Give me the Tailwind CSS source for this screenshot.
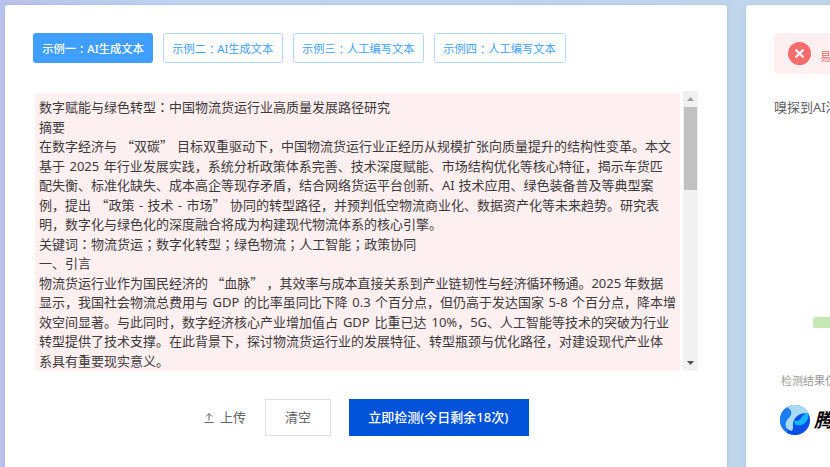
<!DOCTYPE html>
<html lang="zh-CN">
<head>
<meta charset="utf-8">
<title>AI生成文本检测</title>
<script src="https://cdn.jsdelivr.net/npm/@tailwindcss/browser@4"></script>
</head>
<body class="h-[467px] w-[830px] overflow-hidden bg-[#bfd5ef] font-['Noto_Sans','Noto_Sans_CJK_SC',sans-serif]">
<div class="flex h-[467px] gap-[19px] overflow-hidden bg-linear-to-r from-[#b9c2ec] via-[#bdd3ef] via-20% to-[#bfd7ec] pt-[5px] pl-[5px]">
  <main class="flex h-[480px] w-[722px] shrink-0 flex-col rounded-[3px] bg-white pt-7 pl-7 shadow-[0_0_3px_rgba(120,145,180,0.35)]">
    <nav class="flex h-[30px] gap-[9.5px] text-[11.25px] leading-[30px] whitespace-nowrap text-[#409eff]">
      <button class="flex w-[120px] items-center justify-center rounded-[3px] bg-[#409eff] pt-0.5 font-medium text-white">示例一<span lang="ja" class="font-['Noto_Sans_CJK_JP']">：</span>AI生成文本</button>
      <button class="flex w-[120.5px] items-center justify-center rounded-[3px] border border-[#b3d8ff] pt-0.5">示例二<span lang="ja" class="font-['Noto_Sans_CJK_JP']">：</span>AI生成文本</button>
      <button class="flex w-[131.5px] items-center justify-center rounded-[3px] border border-[#b3d8ff] pt-0.5">示例三<span lang="ja" class="font-['Noto_Sans_CJK_JP']">：</span>人工编写文本</button>
      <button class="flex w-[132px] items-center justify-center rounded-[3px] border border-[#b3d8ff] pt-0.5">示例四<span lang="ja" class="font-['Noto_Sans_CJK_JP']">：</span>人工编写文本</button>
    </nav>
    <section class="mt-7 ml-0.5 flex h-[280px] w-[663px]">
      <div class="mt-0.5 grid h-[278px] w-[645px] auto-rows-[19.54px] content-start bg-[#feeff0] pt-[5px] pl-1 text-[13px] leading-[19.5px] whitespace-nowrap text-[#3d3a3c]">
        <p>数字赋能与绿色转型<span lang="ja" class="font-['Noto_Sans_CJK_JP'] leading-none">：</span>中国物流货运行业高质量发展路径研究</p>
        <p>摘要</p>
        <p class="[word-spacing:0.6px]">在数字经济与 <span class="font-['Noto_Sans_CJK_SC'] leading-none">“双碳”</span> 目标双重驱动下，中国物流货运行业正经历从规模扩张向质量提升的结构性变革。本文</p>
        <p class="[word-spacing:1.1px]">基于 2025 年行业发展实践，系统分析政策体系完善、技术深度赋能、市场结构优化等核心特征，揭示车货匹</p>
        <p class="[word-spacing:0.5px]">配失衡、标准化缺失、成本高企等现存矛盾，结合网络货运平台创新、AI 技术应用、绿色装备普及等典型案</p>
        <p class="[word-spacing:1.05px]">例，提出 <span class="font-['Noto_Sans_CJK_SC'] leading-none">“政策</span> - 技术 - <span class="font-['Noto_Sans_CJK_SC'] leading-none">市场”</span> 协同的转型路径，并预判低空物流商业化、数据资产化等未来趋势。研究表</p>
        <p>明，数字化与绿色化的深度融合将成为构建现代物流体系的核心引擎。</p>
        <p>关键词<span lang="ja" class="font-['Noto_Sans_CJK_JP'] leading-none">：</span>物流货运<span lang="ja" class="font-['Noto_Sans_CJK_JP'] leading-none">；</span>数字化转型<span lang="ja" class="font-['Noto_Sans_CJK_JP'] leading-none">；</span>绿色物流<span lang="ja" class="font-['Noto_Sans_CJK_JP'] leading-none">；</span>人工智能<span lang="ja" class="font-['Noto_Sans_CJK_JP'] leading-none">；</span>政策协同</p>
        <p>一、引言</p>
        <p class="[word-spacing:-0.2px]">物流货运行业作为国民经济的 <span class="font-['Noto_Sans_CJK_SC'] leading-none">“血脉”</span> ，其效率与成本直接关系到产业链韧性与经济循环畅通。2025 年数据</p>
        <p class="[word-spacing:1.1px]">显示，我国社会物流总费用与 GDP 的比率虽同比下降 0.3 个百分点，但仍高于发达国家 5-8 个百分点，降本增</p>
        <p class="[word-spacing:1.5px]">效空间显著。与此同时，数字经济核心产业增加值占 GDP 比重已达 10%，5G、人工智能等技术的突破为行业</p>
        <p>转型提供了技术支撑。在此背景下，探讨物流货运行业的发展特征、转型瓶颈与优化路径，对建设现代产业体</p>
        <p>系具有重要现实意义。</p>
      </div>
      <div class="ml-[3px] flex w-[15px] flex-col items-center bg-[#f1f1f1]">
        <svg class="mt-[6px] h-1 w-[7px]" viewBox="0 0 7 4" fill="#9a9a9a"><path d="M3.5 0 7 4H0z"/></svg>
        <div class="mt-[6px] h-[83px] w-[13px] bg-[#c1c1c1]"></div>
        <svg class="mt-auto mb-[6px] h-1 w-[7px]" viewBox="0 0 7 4" fill="#505050"><path d="M0 0h7L3.5 4z"/></svg>
      </div>
    </section>
    <div class="mt-7 ml-[170px] flex h-[37px] items-center text-[13px] whitespace-nowrap text-[#606266]">
      <svg class="h-3 w-3" viewBox="0 0 12 12" fill="none" stroke="#606266" stroke-width="1"><path d="M1.5 10.5h9M6 8.5V1.5M3 4.5l3-3 3 3"/></svg>
      <span class="ml-[5px] w-[26px]">上传</span>
      <button class="ml-[19px] h-[37px] w-[66px] border border-[#dcdfe6]">清空</button>
      <button class="ml-[18px] h-[37px] w-[179.5px] bg-[#0052d9] pr-px font-medium text-white">立即检测(今日剩余18次)</button>
    </div>
  </main>
  <aside class="flex h-[480px] w-[220px] shrink-0 flex-col rounded-[3px] bg-white pt-7 pl-7 whitespace-nowrap shadow-[0_0_3px_rgba(120,145,180,0.35)]">
    <div class="flex h-[41px] items-center rounded-[3px] bg-[#fef0f0] pl-[14px] text-[#f56c6c]">
      <svg class="h-[23px] w-[23px]" viewBox="0 0 23 23"><circle cx="11.5" cy="11.5" r="11.5" fill="#f56c6c"/><path d="m8.2 8.2 6.6 6.6m0-6.6-6.6 6.6" stroke="#fff" stroke-width="2.2" stroke-linecap="round"/></svg>
      <span class="mt-[7px] ml-[9px] text-[11px]">易被检测</span>
    </div>
    <p class="mt-[23px] text-[13px] leading-5 text-[#606266]">嗅探到AI浓度</p>
    <div class="mt-[200px] ml-[39px] h-[11px] w-[100px] rounded-[2px] bg-[#c5e9b2]"></div>
    <p class="mt-[44px] ml-[7px] text-[11px] leading-[18px] text-[#999]">检测结果仅供参考</p>
    <div class="mt-[15px] ml-[6px] flex items-center">
      <svg class="h-[30px] w-[30px]" viewBox="0 0 30 30">
        <circle cx="15" cy="15" r="15" fill="#0a4fe6"/>
        <path d="M6.500 2.600A15 15 0 0 1 29 9.500C25 7 20 8 16 12c-3 3-4 9-2 14-7 0-11-5-8-12 2-5 5-7 .5-11.400Z" fill="#a9dcf2"/>
        <path d="M7 2.300A15 15 0 0 0 9 28.700C4 22 5 16 9 13c3-3 4-8-2-10.700Z" fill="#1f7df3"/>
        <path d="M28.500 8.500C29 15 25 20.500 19 20.500c-3.500 0-5-2-5-5 3 1 6 0 7.500-3 1-2.500 4-4.500 7-4Z" fill="#12b5f7"/>
        <path d="M14 15.500c-1 4 1 6 5 5 4 0 8-3 10-8.500 2 9-5 18-14 18-4 0-7-1-9-3 4 1 7-1 7-4 0-3-.5-5 1-7.500Z" fill="#0a4fe6"/>
      </svg>
      <span class="ml-1 text-[19px] leading-[30px] font-bold text-black italic">腾讯</span>
    </div>
  </aside>
</div>
</body>
</html>
